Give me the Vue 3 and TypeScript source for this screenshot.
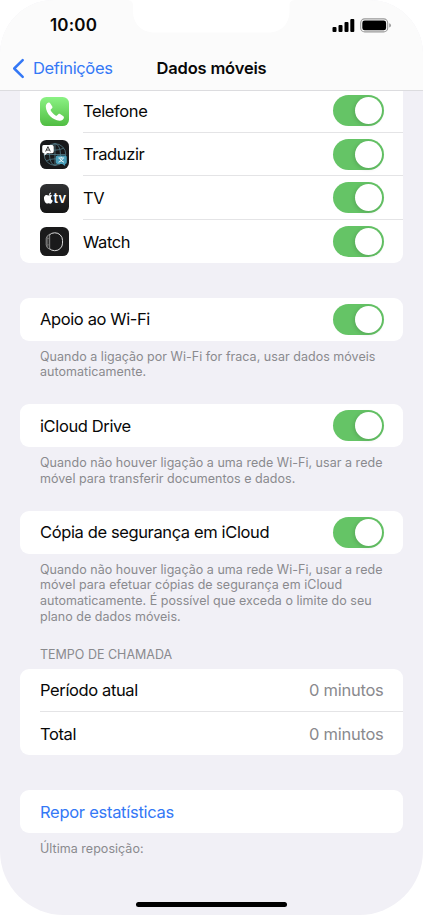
<script setup lang="ts">
import { ref } from 'vue'

interface AppEntry {
  id: string
  name: string
  enabled: boolean
}

interface Option {
  title: string
  lines: string[]
  enabled: boolean
  spacing: string
}

const apps = ref<AppEntry[]>([
  { id: 'phone', name: 'Telefone', enabled: true },
  { id: 'translate', name: 'Traduzir', enabled: true },
  { id: 'tv', name: 'TV', enabled: true },
  { id: 'watch', name: 'Watch', enabled: true },
])

const options = ref<Option[]>([
  {
    title: 'Apoio ao Wi-Fi',
    lines: ['Quando a ligação por Wi-Fi for fraca, usar dados móveis', 'automaticamente.'],
    enabled: true,
    spacing: 'wifi',
  },
  {
    title: 'iCloud Drive',
    lines: ['Quando não houver ligação a uma rede Wi-Fi, usar a rede', 'móvel para transferir documentos e dados.'],
    enabled: true,
    spacing: 'drive',
  },
  {
    title: 'Cópia de segurança em iCloud',
    lines: [
      'Quando não houver ligação a uma rede Wi-Fi, usar a rede',
      'móvel para efetuar cópias de segurança em iCloud',
      'automaticamente. É possível que exceda o limite do seu',
      'plano de dados móveis.',
    ],
    enabled: true,
    spacing: 'backup',
  },
])

const callTimes = [
  { label: 'Período atual', value: '0 minutos' },
  { label: 'Total', value: '0 minutos' },
]
</script>

<template>
  <div class="screen">
    <svg class="notch" width="169" height="33" viewBox="0 0 169 33">
      <path d="M0 0H169C164 0 162.500 2 162.500 6V11C162.500 24 154 32.500 141 32.500H28C15 32.500 6 24 6 11V6C6 2 4 0 0 0Z" fill="#fff" />
    </svg>

    <header class="header">
      <div class="status">
        <span class="time">10:00</span>
        <div class="indicators">
          <svg width="23" height="15" viewBox="0 0 23 15">
            <rect x="0.500" y="9" width="4" height="5" rx="1" />
            <rect x="6.500" y="7" width="4" height="7" rx="1" />
            <rect x="12.500" y="4" width="4" height="10" rx="1" />
            <rect x="18.300" y="1" width="4" height="13" rx="1" />
          </svg>
          <svg width="32" height="15" viewBox="0 0 32 15">
            <rect x="0.700" y="0.900" width="27" height="13" rx="4" fill="none" stroke="#999" stroke-width="1.100" />
            <rect x="2.300" y="2.500" width="23.800" height="9.800" rx="2.400" />
            <path d="M29.200 5.200Q31 5.800 31 7.400T29.200 9.600Z" fill="#999" />
          </svg>
        </div>
      </div>
      <nav class="nav">
        <a class="back">
          <svg width="13" height="21" viewBox="0 0 13 21">
            <path d="M10.700 2.200L2.200 10.500L10.700 18.800" fill="none" stroke="#3478f6" stroke-width="2.500" stroke-linecap="round" stroke-linejoin="round" />
          </svg>
          <span>Definições</span>
        </a>
        <h1 class="title">Dados móveis</h1>
      </nav>
    </header>

    <main class="content">
      <section class="card apps">
        <div v-for="app in apps" :key="app.id" class="row app-row">
          <svg v-if="app.id === 'phone'" class="icon" viewBox="0 0 30 30">
            <defs>
              <linearGradient id="call" x1="0" y1="0" x2="0" y2="1">
                <stop offset="0" stop-color="#8bf284" />
                <stop offset="1" stop-color="#50bd42" />
              </linearGradient>
            </defs>
            <rect width="30" height="30" rx="6.500" fill="url(#call)" />
            <path d="M9 5.800C7.200 6.300 5.900 8 6 10C6.300 17.300 13.200 24 20.200 24.500C22.400 24.600 24.200 23.300 24.700 21.600C24.900 20.900 24.700 20.400 24.200 20L20.800 17.700C20.100 17.300 19.500 17.400 18.900 17.900L17.500 19.100C17.100 19.400 16.600 19.400 16.100 19.100C14.100 17.800 12.300 16 11.200 14.200C10.900 13.700 10.900 13.200 11.300 12.800L12.500 11.600C13 11 13.100 10.400 12.700 9.700L10.700 6.600C10.300 6 9.700 5.700 9 5.800Z" fill="#fff" />
          </svg>
          <svg v-else-if="app.id === 'translate'" class="icon" viewBox="0 0 30 30">
            <rect width="30" height="30" rx="6.500" fill="#18191b" />
            <g fill="none" stroke="#527985" stroke-width="0.850">
              <circle cx="15.500" cy="15" r="11.200" />
              <ellipse cx="15.500" cy="15" rx="5.700" ry="11.200" />
              <path d="M15.500 3.800V26.200M4.300 15H26.700M6.500 8.500Q15.500 12.500 24.500 8.500M6.500 21.500Q15.500 17.500 24.500 21.500" />
            </g>
            <path d="M3.700 5.300H12.500Q14.200 5.300 14.200 7V12Q14.200 13.700 12.500 13.700H7.300L4.500 16.200V13.700H3.700Q2.300 13.700 2.300 12V7Q2.300 5.300 3.700 5.300Z" fill="#fff" />
            <path d="M5.800 11.900L8.200 6.900L10.600 11.900M6.700 10.400H9.700" fill="none" stroke="#333" stroke-width="1" />
            <path d="M18 16H26Q27.700 16 27.700 17.700V23Q27.700 24.700 26 24.700V27L23 24.700H18Q16.300 24.700 16.300 23V17.700Q16.300 16 18 16Z" fill="#489db8" />
            <path d="M19 18.600H25M22 17.300V18.600M20.300 19Q21.500 22 24.800 23M23.800 19Q22.500 22 19.200 23" fill="none" stroke="#fff" stroke-width="0.900" />
          </svg>
          <svg v-else-if="app.id === 'tv'" class="icon" viewBox="0 0 30 30">
            <defs>
              <linearGradient id="dark" x1="0" y1="0" x2="0" y2="1">
                <stop offset="0" stop-color="#303133" />
                <stop offset="1" stop-color="#151515" />
              </linearGradient>
            </defs>
            <rect width="30" height="30" rx="6.500" fill="url(#dark)" />
            <path d="M9.300 11.300C9.200 9.900 10.200 8.900 11.400 8.700C11.500 10.100 10.500 11.200 9.300 11.300ZM12.700 12.200C10.500 13.500 10.900 16.400 13.300 17.300C12.600 19 11.700 20.400 10.600 20.300C9.800 20.200 9.600 19.800 8.800 19.800C8 19.800 7.700 20.200 7 20.300C5.200 20.300 2.300 13.600 5.600 11.700C6.900 11 8 11.900 8.800 11.900C9.700 11.900 11.500 10.700 12.700 12.200Z" fill="#fff" />
            <text x="14" y="20" class="tv-mark">tv</text>
          </svg>
          <svg v-else class="icon" viewBox="0 0 30 30">
            <rect width="30" height="30" rx="6.500" fill="#1a1a1b" />
            <rect x="7.300" y="6" width="16" height="18.500" rx="7.800" fill="none" stroke="#e0e0e0" stroke-width="1" />
            <path d="M10 7.400Q6.300 9.500 6.400 12V18.500Q6.400 21.500 10 23Z" fill="#292929" stroke="#aaa" stroke-width="0.800" />
            <path d="M8 9V21M6.500 12H9.500M6.500 18.500H9.500" stroke="#777" stroke-width="0.800" />
          </svg>
          <div class="app-body">
            <span class="label">{{ app.name }}</span>
            <button class="toggle" :class="{ on: app.enabled }" role="switch" :aria-checked="app.enabled" @click="app.enabled = !app.enabled"><i class="knob"></i></button>
          </div>
        </div>
      </section>

      <section v-for="option in options" :key="option.title" class="group" :class="option.spacing">
        <div class="card">
          <div class="row option-row">
            <span class="label">{{ option.title }}</span>
            <button class="toggle" :class="{ on: option.enabled }" role="switch" :aria-checked="option.enabled" @click="option.enabled = !option.enabled"><i class="knob"></i></button>
          </div>
        </div>
        <p class="note"><span v-for="line in option.lines" :key="line" class="line">{{ line }}</span></p>
      </section>

      <section class="group calls">
        <h2 class="caption">TEMPO DE CHAMADA</h2>
        <div class="card">
          <div v-for="item in callTimes" :key="item.label" class="row call-row">
            <span class="label">{{ item.label }}</span>
            <span class="value">{{ item.value }}</span>
          </div>
        </div>
      </section>

      <section class="group reset">
        <div class="card">
          <div class="row"><a class="label link">Repor estatísticas</a></div>
        </div>
        <p class="note">Última reposição:</p>
      </section>
    </main>
    <div class="home-bar"></div>
  </div>
</template>

<style>
body {
  margin: 0;
  background: #fff;
}
</style>

<style scoped>
.screen {
  position: relative;
  display: flex;
  flex-direction: column;
  width: 423px;
  height: 915px;
  overflow: hidden;
  border-radius: 54px 54px 64px 64px;
  background: #f1f0f6;
  font-family: Inter, "Liberation Sans", sans-serif;
  color: #080808;
}
.notch {
  position: absolute;
  top: 0;
  left: 127px;
  z-index: 2;
}
.header {
  box-sizing: border-box;
  flex: none;
  height: 91px;
  border-bottom: 1px solid #dcdcdf;
  background: #fbfbfb;
  position: relative;
  z-index: 1;
}
.status {
  display: flex;
  align-items: center;
  justify-content: space-between;
  height: 50px;
  padding: 0 31px 0 50px;
}
.time {
  font-size: 17px;
  font-weight: 600;
  line-height: 20px;
  letter-spacing: 0.150px;
}
.indicators {
  display: flex;
  gap: 5px;
}
.nav {
  display: grid;
  grid-template-columns: 1fr auto 1fr;
  align-items: center;
  height: 36px;
}
.back {
  display: flex;
  align-items: center;
  gap: 8px;
  padding-left: 12px;
  color: #3478f6;
  font-size: 16.500px;
  line-height: 20px;
  letter-spacing: -0.350px;
}
.title {
  margin: 0;
  font-size: 16.500px;
  font-weight: 600;
  line-height: 20px;
  letter-spacing: -0.170px;
}
.content {
  flex: 1;
  padding: 0 20px;
}
.card {
  border-radius: 9px;
  background: #fff;
}
.apps {
  margin-top: -1.300px;
  border-radius: 0 0 9px 9px;
}
.row {
  box-sizing: border-box;
  display: flex;
  align-items: center;
  justify-content: space-between;
  height: 43.400px;
  padding: 0 19.500px 0 20px;
  font-size: 16.500px;
}
.label {
  letter-spacing: -0.380px;
}
.app-row {
  padding-right: 0;
}
.option-row {
  padding-right: 19px;
}
.icon {
  flex: none;
  width: 29px;
  height: 29px;
  margin-left: -0.500px;
}
.tv-mark {
  fill: #fff;
  font-size: 13.500px;
  font-weight: 600;
}
.app-body {
  box-sizing: border-box;
  display: flex;
  align-items: center;
  justify-content: space-between;
  width: 320px;
  height: 100%;
  padding-right: 19px;
  border-bottom: 1px solid #e4e4e6;
}
.app-row:last-child .app-body {
  border-bottom: 0;
}
.toggle {
  box-sizing: border-box;
  flex: none;
  display: flex;
  justify-content: flex-start;
  width: 51px;
  height: 31px;
  padding: 2px;
  border: 0;
  border-radius: 16px;
  background: #e9e9eb;
}
.toggle.on {
  justify-content: flex-end;
  background: #65c466;
}
.knob {
  width: 27px;
  height: 27px;
  border-radius: 50%;
  background: #fff;
  box-shadow: -1px 1px 4px rgba(0, 0, 0, 0.150);
}
.note {
  margin: 0;
  padding: 7.600px 20px 0;
  color: #8a8a8e;
  font-size: 12.500px;
  line-height: 15.800px;
  letter-spacing: 0.030px;
  white-space: nowrap;
}
.line {
  display: block;
}
.wifi {
  margin-top: 34.300px;
  height: 106.500px;
}
.drive {
  height: 106.500px;
}
.backup {
  height: 136px;
}
.caption {
  margin: 0;
  height: 22px;
  padding-left: 20px;
  color: #8a8a8e;
  font-size: 12.500px;
  font-weight: 400;
  line-height: 16px;
}
.value {
  color: #8a8a8e;
  letter-spacing: -0.250px;
}
.call-row:first-child {
  background: linear-gradient(#e4e4e6, #e4e4e6) 20px 100% / 100% 1px no-repeat;
}
.reset {
  margin-top: 34.500px;
}
.link {
  color: #3478f6;
  letter-spacing: -0.280px;
}
.home-bar {
  position: absolute;
  bottom: 8px;
  left: 136px;
  width: 151px;
  height: 5px;
  border-radius: 3px;
  background: #000;
}
</style>
